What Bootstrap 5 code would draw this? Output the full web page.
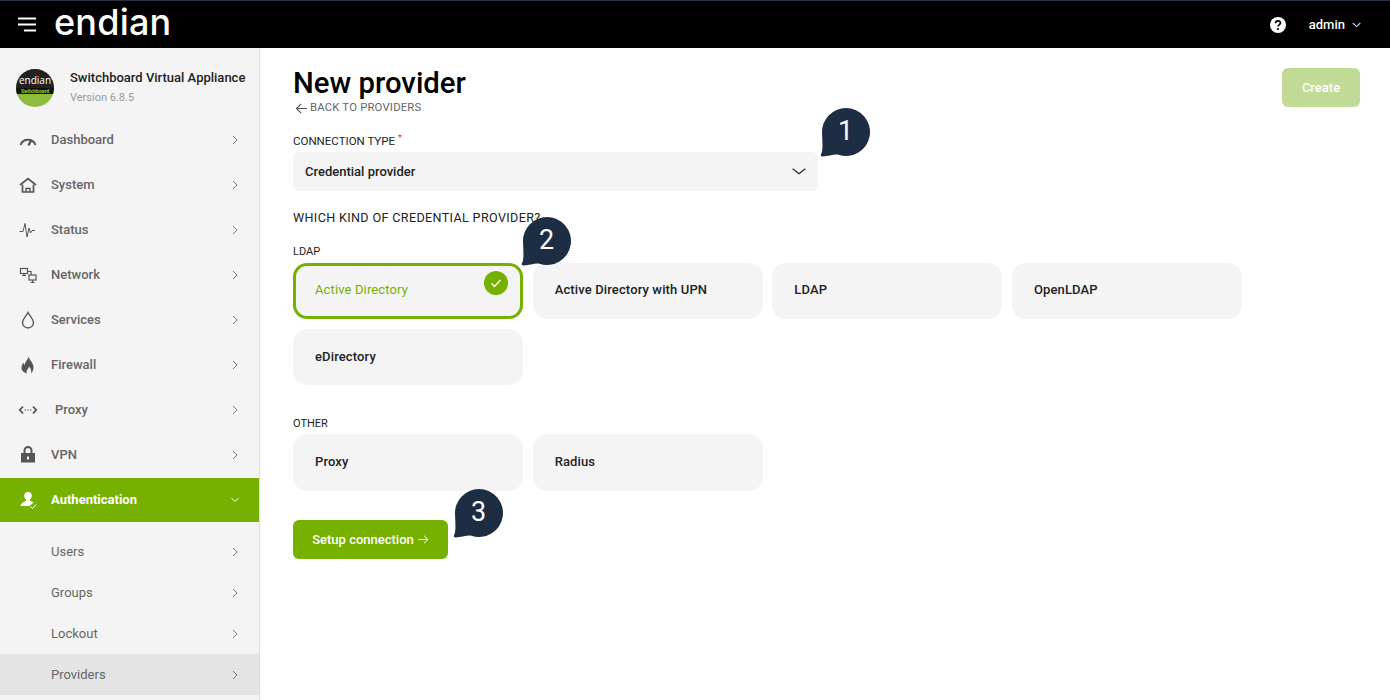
<!doctype html>
<html lang="en"><head><meta charset="utf-8"><title>New provider</title>
<link href="https://cdn.jsdelivr.net/npm/bootstrap@5.3.0/dist/css/bootstrap.min.css" rel="stylesheet">
<style>
html,body{height:700px;overflow:hidden}
body{font-family:Roboto,"Liberation Sans",sans-serif;font-size:13px;color:#222;background:#fff}
.topbar{height:48px;background:#000;border-top:1px solid #26323f;color:#fff;padding:0 29px 0 18px}
.burger{width:18px;height:15px;display:block}
.brand{font-family:Inter,"Open Sans",sans-serif;font-size:36px;font-weight:500;line-height:40px;letter-spacing:.2px;margin:-5px 0 0 18px;color:#fff}
.useradmin{font-size:13px;font-weight:500;margin-left:23px}
.shell{height:652px}
.side{width:260px;flex:none;background:#f4f4f4;border-right:1px solid #ddd;overflow:hidden}
.prod{height:70px;padding:21px 0 0 16px}
.disc{width:38px;height:38px;border-radius:50%;overflow:hidden;background:#8fbb3c;margin-right:16px;flex:none}
.disc-top{height:19px;background:#222;color:#fff;font-size:10px;font-weight:500;line-height:22px;text-align:center;font-family:"Open Sans",sans-serif}
.disc-band{height:6px;background:#111;color:#9c3;font-size:5px;line-height:6px;font-weight:700;text-align:center}
.prod-name{font-weight:500;font-size:13px;color:#222;line-height:16px;margin-top:1px}
.prod-ver{font-size:11px;color:#999;line-height:16px;margin-top:4px}
.mitem{height:45px;display:flex;align-items:center;padding:0 21px 2px 18px;color:#666;font-weight:500;font-size:13px;text-decoration:none}
.mitem>svg:first-child{width:20px;height:20px;margin-right:13px;flex:none}
.mitem .lbl{flex:1}
.mitem .chev{width:6px;height:10px;flex:none}
.mitem.on{background:#76b000;color:#fff;height:44px;font-weight:700;padding-bottom:0}
.subs{padding-top:9px}
.sitem{height:41px;display:flex;align-items:center;padding-left:51px;padding-right:21px;color:#666;font-size:13px;text-decoration:none}
.sitem .lbl{flex:1}
.sitem .chev{width:6px;height:10px}
.sitem.cur{background:#e4e4e4}
.main{padding:20px 30px 0 33px;position:relative;min-width:0}
.ttl{font-size:29.300px;font-weight:500;line-height:30px;color:#000;margin:0 0 3px}
.back{font-size:11.300px;color:#666;text-transform:uppercase;letter-spacing:.2px;line-height:14px;text-decoration:none;display:flex;align-items:center}
.back svg{width:13px;height:11px;margin:0 2px 0 2px}
.btn-make{width:78px;height:39px;background:#c1da96;color:#fff;font-weight:500;font-size:13px;border-radius:6px;display:flex;align-items:center;justify-content:center;border:0}
.flabel{font-size:11.500px;color:#222;text-transform:uppercase;line-height:14px}
.flabel.big{font-size:12.600px;letter-spacing:.35px}
.req{color:#e33;font-size:9px;vertical-align:4px;margin-left:0}
.picker{width:525px;height:39px;background:#f4f4f4;border-radius:6px;padding:0 12px 0 12px;font-size:13px;font-weight:500;color:#222;margin-top:4px}
.picker svg{width:14px;height:7px}
.tiles{display:grid;grid-template-columns:repeat(4,230px);column-gap:9.670px;row-gap:10px}
.tile{height:56px;background:#f4f4f4;border-radius:14px;padding:0 22px 3px;display:flex;align-items:center;font-size:13px;font-weight:500;letter-spacing:.13px;color:#222;position:relative}
.tile.low{padding-bottom:1px}
.tile.tall{height:57px}
.tile.sel{border:3px solid #76b000;color:#76b000;padding:0 19px 3px;font-weight:400}
.tick{position:absolute;top:5px;right:12px;width:24px;height:24px}
.go{width:155px;height:39px;background:#76b000;color:#fff;font-weight:500;font-size:13px;border-radius:6px;border:0;display:flex;align-items:center;justify-content:center;gap:4px}
.anch{position:relative}
.bub{position:absolute;width:50px;height:50px;color:#fff;font-size:27px;line-height:48px;text-align:center;z-index:3}
.bub svg{position:absolute;left:0;top:0;width:50px;height:50px}
.bub span{position:relative;display:block;padding-left:1px}
</style></head><body>
<header class="topbar d-flex align-items-center">
<svg class="burger" viewBox="0 0 18 15"><path d="M0 1.500H18M0 7.500H18M6 13.500H18" stroke="#fff" stroke-width="2" fill="none"/></svg>
<span class="brand">endian</span>
<div class="ms-auto d-flex align-items-center">
<svg width="16" height="16" viewBox="0 0 16 16"><circle cx="8" cy="8" r="8" fill="#fff"/><path d="M5.600 6.200c0-1.500 1.100-2.300 2.400-2.300s2.400.8 2.400 2.100c0 1.900-2.400 1.800-2.400 3.600" stroke="#000" stroke-width="1.700" fill="none"/><circle cx="8" cy="12" r="1.100" fill="#000"/></svg>
<span class="useradmin">admin</span>
<svg style="margin-left:7px" width="9" height="6" viewBox="0 0 9 6"><path d="M.7 1l3.800 3.600L8.300 1" stroke="#ccc" stroke-width="1.100" fill="none"/></svg>
</div>
</header>
<div class="shell d-flex">
<nav class="side">
<div class="prod d-flex">
<div class="disc"><div class="disc-top">endian</div><div class="disc-band">Switchboard</div></div>
<div><div class="prod-name">Switchboard Virtual Appliance</div><div class="prod-ver">Version 6.8.5</div></div>
</div>
<a class="mitem"><svg viewBox="0 0 20 20" fill="none" stroke="#555"><path d="M2.500 15a8 8 0 0 1 15 0" stroke-width="2"/><path d="M10.500 15.500L13 10.500" stroke-width="2.400"/></svg><span class="lbl">Dashboard</span><svg class="chev" viewBox="0 0 6 10"><path d="M1 1l4 4-4 4" stroke="#777" fill="none"/></svg></a>
<a class="mitem"><svg viewBox="0 0 20 20" fill="none" stroke="#555" stroke-width="1.700"><path d="M2 10l8-6.500L18 10"/><path d="M4.500 9.500V17h11V9.500"/><path d="M8 17v-3.500h4V17" stroke-width="1.400"/></svg><span class="lbl">System</span><svg class="chev" viewBox="0 0 6 10"><path d="M1 1l4 4-4 4" stroke="#777" fill="none"/></svg></a>
<a class="mitem"><svg viewBox="0 0 20 20" fill="none" stroke="#555" stroke-width="1"><path d="M1.500 11.500H5L7 3.500l2 13.500 2-9 1.500 5 1.500-2.500h3"/></svg><span class="lbl">Status</span><svg class="chev" viewBox="0 0 6 10"><path d="M1 1l4 4-4 4" stroke="#777" fill="none"/></svg></a>
<a class="mitem"><svg viewBox="0 0 20 20" fill="none" stroke="#555" stroke-width="1.200"><rect x="2.500" y="3.500" width="7" height="5"/><path d="M6 8.500v2M4 10.500h4"/><rect x="11" y="10" width="7" height="5"/><path d="M14.500 15v2M12.500 17.500h4M9.500 6.500h3.500V10"/></svg><span class="lbl">Network</span><svg class="chev" viewBox="0 0 6 10"><path d="M1 1l4 4-4 4" stroke="#777" fill="none"/></svg></a>
<a class="mitem"><svg viewBox="0 0 20 20" fill="none" stroke="#555" stroke-width="1.300"><path d="M10 2.500C8.500 6 4.500 8.800 4.500 12.500a5.500 5.500 0 0 0 11 0C15.500 8.800 11.500 6 10 2.500z"/></svg><span class="lbl">Services</span><svg class="chev" viewBox="0 0 6 10"><path d="M1 1l4 4-4 4" stroke="#777" fill="none"/></svg></a>
<a class="mitem"><svg viewBox="0 0 20 20" fill="#555"><path d="M10.500 1.500c.5 3 4.500 5.500 5 10.500.2 3-1 5-2.500 6.500.6-2 .3-4.500-2-7-.3 2-2.500 3.500-2.500 5 0 .8.300 1.500.500 2C6 17.500 3.500 16 3.500 12.500c0-2 1-3.500 2.200-5 0 1.200.3 2.200 1 2.800C6.800 7 9.800 5 10.500 1.500z"/></svg><span class="lbl">Firewall</span><svg class="chev" viewBox="0 0 6 10"><path d="M1 1l4 4-4 4" stroke="#777" fill="none"/></svg></a>
<a class="mitem"><svg viewBox="0 0 20 20" fill="none" stroke="#555" stroke-width="1.800" style="width:20px;margin-right:17px"><path d="M5 6.500L1.800 10 5 13.500M15 6.500L18.200 10 15 13.500"/><path d="M6.700 10h1M9.500 10h1M12.300 10h1" stroke-width="1.400"/></svg><span class="lbl">Proxy</span><svg class="chev" viewBox="0 0 6 10"><path d="M1 1l4 4-4 4" stroke="#777" fill="none"/></svg></a>
<a class="mitem"><svg viewBox="0 0 20 20"><path fill="#555" fill-rule="evenodd" d="M3 8h2.500V5.500a4.500 4.500 0 0 1 9 0V8H17v9.500H3zM7.500 8h5V5.500a2.500 2.500 0 0 0-5 0zM9 11.500v3h2v-3z"/></svg><span class="lbl">VPN</span><svg class="chev" viewBox="0 0 6 10"><path d="M1 1l4 4-4 4" stroke="#777" fill="none"/></svg></a>
<a class="mitem on"><svg viewBox="0 0 20 20"><path d="M10 2a3.800 3.800 0 0 1 3.800 3.800c0 1.700-.9 3-1.800 3.700v1.500c1.300.3 2.600.8 3.500 1.500l-4 3.500H2.500c0-2.500 3.500-4.200 5.500-5V9.500c-.9-.7-1.800-2-1.800-3.700A3.800 3.800 0 0 1 10 2z" fill="#fff"/><path d="M12.500 16.500l2 2 3.500-4" stroke="#fff" fill="none" stroke-width="1"/></svg><span class="lbl">Authentication</span><svg style="width:10px;height:6px;margin-right:-2px" viewBox="0 0 10 6"><path d="M1.500 1l3.500 3.500L8.500 1" stroke="#fff" fill="none"/></svg></a>
<div class="subs">
<a class="sitem"><span class="lbl">Users</span><svg class="chev" viewBox="0 0 6 10"><path d="M1 1l4 4-4 4" stroke="#777" fill="none"/></svg></a>
<a class="sitem"><span class="lbl">Groups</span><svg class="chev" viewBox="0 0 6 10"><path d="M1 1l4 4-4 4" stroke="#777" fill="none"/></svg></a>
<a class="sitem"><span class="lbl">Lockout</span><svg class="chev" viewBox="0 0 6 10"><path d="M1 1l4 4-4 4" stroke="#777" fill="none"/></svg></a>
<a class="sitem cur"><span class="lbl">Providers</span><svg class="chev" viewBox="0 0 6 10"><path d="M1 1l4 4-4 4" stroke="#777" fill="none"/></svg></a>
</div>
</nav>
<main class="main flex-grow-1">
<div class="d-flex justify-content-between align-items-start">
<div>
<h1 class="ttl">New provider</h1>
<a class="back"><svg viewBox="0 0 13 11"><path d="M6 1L1.500 5.500 6 10M1.500 5.500H12" stroke="#555" stroke-width="1.100" fill="none"/></svg>Back to providers</a>
</div>
<button class="btn-make">Create</button>
</div>
<div class="flabel" style="margin-top:16px">Connection type <span class="req">*</span></div>
<div class="anch" style="width:525px">
<div class="picker d-flex align-items-center justify-content-between"><span>Credential provider</span><svg viewBox="0 0 14 7"><path d="M.7.700L7 5.800 13.300.700" stroke="#222" stroke-width="1.100" fill="none"/></svg></div>
<div class="bub" style="left:527px;top:-45px"><svg viewBox="0 0 50 50"><path fill="#1d2d44" d="M26 1a24 24 0 1 1-7.500 46.800c-4-1-11 1.900-16 1.700-1.800-.1-2.200-1.500-1.300-2.800C3 44 2.500 36 2 26A24 24 0 0 1 26 1z"/></svg><span>1</span></div>
</div>
<div class="flabel big" style="margin-top:20px">Which kind of credential provider?</div>
<div class="flabel" style="margin-top:20px;font-size:11px">LDAP</div>
<div class="anch" style="margin-top:4px">
<div class="tiles">
<div class="tile sel">Active Directory<svg class="tick" viewBox="0 0 24 24"><circle cx="12" cy="12" r="12" fill="#76b000"/><path d="M7.500 12.500l3 3 6-6.500" stroke="#fff" stroke-width="1.300" fill="none"/></svg></div>
<div class="tile">Active Directory with UPN</div>
<div class="tile">LDAP</div>
<div class="tile">OpenLDAP</div>
<div class="tile low">eDirectory</div>
</div>
<div class="bub" style="left:228px;top:-47px"><svg viewBox="0 0 50 50"><path fill="#1d2d44" d="M26 1a24 24 0 1 1-7.500 46.800c-4-1-11 1.900-16 1.700-1.800-.1-2.200-1.500-1.300-2.800C3 44 2.500 36 2 26A24 24 0 0 1 26 1z"/></svg><span>2</span></div>
</div>
<div class="flabel" style="margin-top:32px;font-size:11px">Other</div>
<div class="tiles" style="margin-top:3px"><div class="tile tall low">Proxy</div><div class="tile tall low">Radius</div></div>
<div class="anch" style="width:155px;margin-top:29px">
<button class="go">Setup connection <svg width="11" height="9" viewBox="0 0 11 9"><path d="M6 .7L10 4.500 6 8.300M.5 4.500H10" stroke="#fff" fill="none"/></svg></button>
<div class="bub" style="left:160px;top:-32px"><svg viewBox="0 0 50 50"><path fill="#1d2d44" d="M26 1a24 24 0 1 1-7.500 46.800c-4-1-11 1.900-16 1.700-1.800-.1-2.200-1.500-1.300-2.800C3 44 2.500 36 2 26A24 24 0 0 1 26 1z"/></svg><span>3</span></div>
</div>
</main>
</div>
<script src="https://cdn.jsdelivr.net/npm/bootstrap@5.3.0/dist/js/bootstrap.bundle.min.js"></script>
</body></html>
